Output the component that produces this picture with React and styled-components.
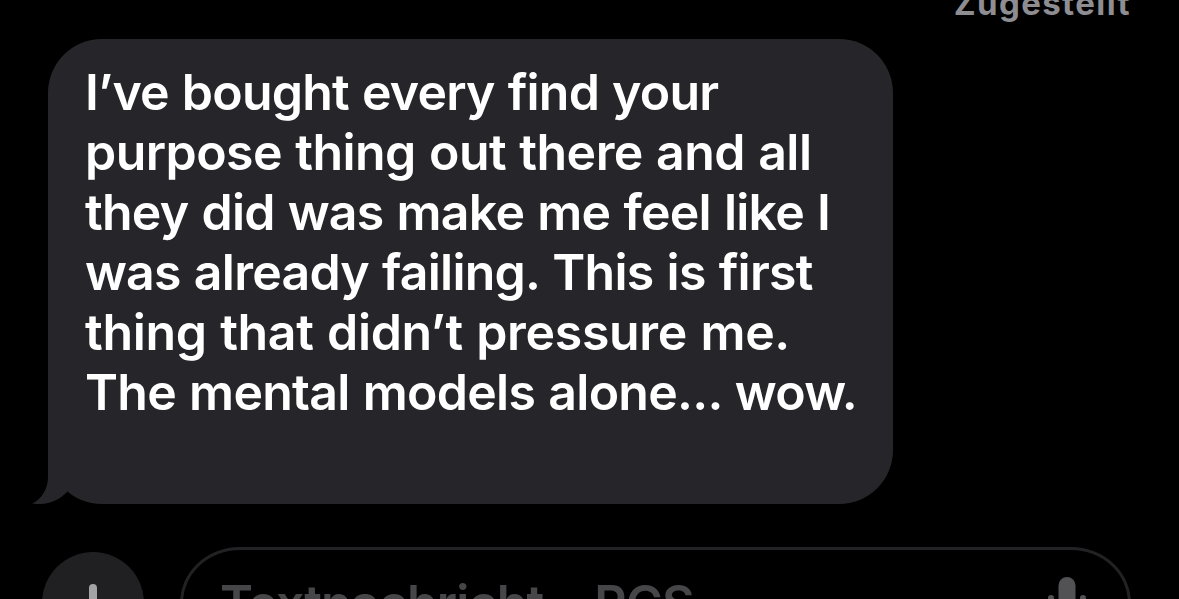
import React from "react";

import styled, { createGlobalStyle } from "styled-components";

const lines = [
  { text: "I’ve bought every find your", spacing: -0.79 },
  { text: "purpose thing out there and all", spacing: -0.55 },
  { text: "they did was make me feel like I", spacing: -0.75 },
  { text: "was already failing. This is first", spacing: -0.75 },
  { text: "thing that didn’t pressure me.", spacing: -0.33 },
  { text: "The mental models alone... wow.", spacing: -0.72 },
];

export default function App() {
  return (
    <Screen>
      <GlobalStyle />
      <Status>Zugestellt</Status>
      <Bubble>
        {lines.map((line) => (
          <Line key={line.text} $spacing={line.spacing}>
            {line.text}
          </Line>
        ))}
        <Tail viewBox="0 0 40 70">
          <path d="M16 0 V43 C16 55 10 65 0 69.6 C15 71.5 26 67 35 58 L40 0 Z" />
        </Tail>
      </Bubble>
      <Composer>
        <AddButton>
          <svg width="102" height="102" viewBox="0 0 102 102">
            <path d="M51 36 V68 M35 52 H67" />
          </svg>
        </AddButton>
        <Field>
          <Placeholder>
            Textnachricht <Dot>•</Dot> RCS
          </Placeholder>
          <Mic width="36" height="56" viewBox="0 0 36 56">
            <rect x="9.5" y="0" width="17" height="34" rx="8.5" />
            <path d="M2 21 V25 C2 35 9 41 18 41 C27 41 34 35 34 25 V21 M18 41 V51 M9 51 H27" />
          </Mic>
        </Field>
      </Composer>
    </Screen>
  );
}

const GlobalStyle = createGlobalStyle`
  body {
    margin: 0;
    background: #000;
    overflow: hidden;
  }
`;

const Screen = styled.div`
  width: 1179px;
  height: 599px;
  overflow: hidden;
  background: #000;
  font-family: Inter, sans-serif;
`;

const Status = styled.div`
  height: 39px;
  padding-right: 48px;
  text-align: right;
  font-size: 33px;
  font-weight: 700;
  line-height: 6px;
  letter-spacing: 1.4px;
  color: #8d8d92;
`;

const Bubble = styled.div`
  position: relative;
  box-sizing: border-box;
  width: 845px;
  height: 465px;
  margin-left: 48px;
  padding: 23px 37px;
  border-radius: 54px;
  background: #262529;
`;

const Line = styled.div`
  width: max-content;
  font-size: 50px;
  font-weight: 600;
  line-height: 60px;
  letter-spacing: ${(props) => props.$spacing}px;
  word-spacing: 1.2px;
  white-space: nowrap;
  color: #fff;
`;

const Tail = styled.svg`
  position: absolute;
  left: -16px;
  bottom: 0;
  width: 40px;
  height: 70px;
  fill: #262529;
`;

const Composer = styled.div`
  display: flex;
  margin: 43px 0 0 42px;
`;

const AddButton = styled.div`
  margin-top: 5px;
  width: 102px;
  height: 102px;
  border-radius: 50%;
  background: #202022;

  svg {
    stroke: #a3a3a6;
    stroke-width: 8;
    stroke-linecap: round;
  }
`;

const Field = styled.div`
  box-sizing: border-box;
  display: flex;
  justify-content: space-between;
  width: 951px;
  height: 112px;
  margin-left: 36px;
  padding: 27px 43px 0 37px;
  border: 3px solid #222224;
  border-radius: 60px / 56px;
`;

const Placeholder = styled.span`
  margin-top: -4px;
  font-size: 50px;
  font-weight: 600;
  line-height: 60px;
  letter-spacing: -0.85px;
  word-spacing: 1.5px;
  color: #464648;
`;

const Dot = styled.span`
  line-height: 0;
  vertical-align: -3px;
`;

const Mic = styled.svg`
  overflow: visible;
  fill: #525254;

  path {
    fill: none;
    stroke: #525254;
    stroke-width: 6;
    stroke-linecap: round;
  }
`;
